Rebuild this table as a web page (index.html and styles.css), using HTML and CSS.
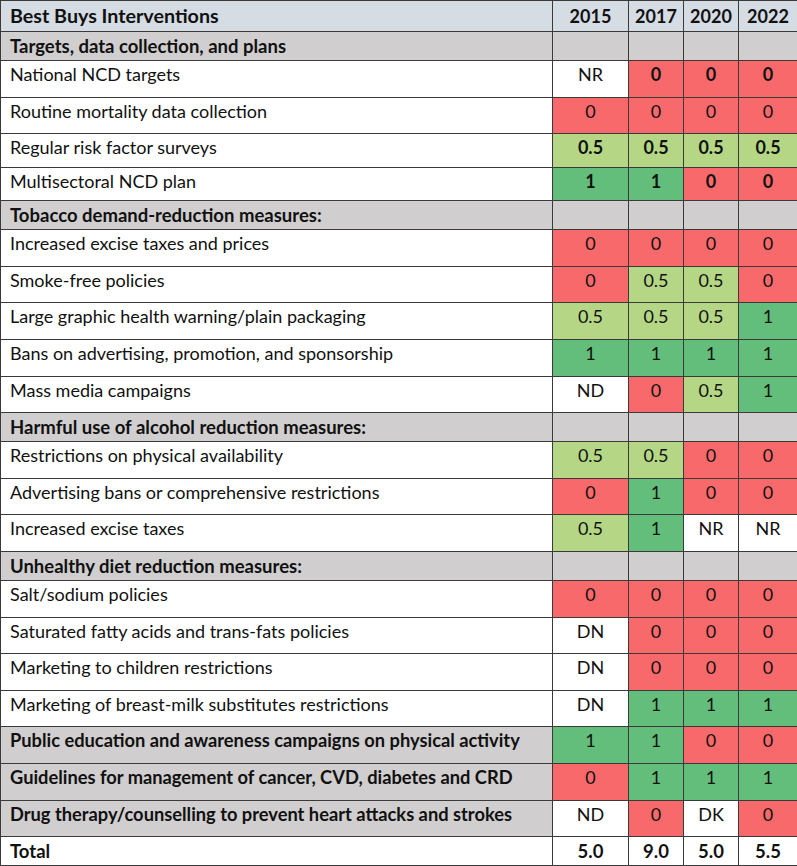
FILE: index.html
```html
<!DOCTYPE html>
<html>
<head>
<meta charset="utf-8">
<link rel="stylesheet" href="styles.css">
</head>
<body>
<table class="bb">
  <colgroup>
    <col class="c-label"><col class="c-2015"><col class="c-yr"><col class="c-yr"><col class="c-2022">
  </colgroup>
  <tr class="head">
    <th class="lbl">Best Buys Interventions</th><th>2015</th><th>2017</th><th>2020</th><th>2022</th>
  </tr>
  <tr class="sec">
    <td class="lbl">Targets, data collection, and plans</td><td></td><td></td><td></td><td></td>
  </tr>
  <tr class="row">
    <td class="lbl">National NCD targets</td><td>NR</td><td class="red b">0</td><td class="red b">0</td><td class="red b">0</td>
  </tr>
  <tr class="row">
    <td class="lbl">Routine mortality data collection</td><td class="red">0</td><td class="red">0</td><td class="red">0</td><td class="red">0</td>
  </tr>
  <tr class="row short">
    <td class="lbl">Regular risk factor surveys</td><td class="lg b">0.5</td><td class="lg b">0.5</td><td class="lg b">0.5</td><td class="lg b">0.5</td>
  </tr>
  <tr class="row short">
    <td class="lbl">Multisectoral NCD plan</td><td class="dg b">1</td><td class="dg b">1</td><td class="red b">0</td><td class="red b">0</td>
  </tr>
  <tr class="sec">
    <td class="lbl">Tobacco demand-reduction measures:</td><td></td><td></td><td></td><td></td>
  </tr>
  <tr class="row">
    <td class="lbl">Increased excise taxes and prices</td><td class="red">0</td><td class="red">0</td><td class="red">0</td><td class="red">0</td>
  </tr>
  <tr class="row">
    <td class="lbl">Smoke-free policies</td><td class="red">0</td><td class="lg">0.5</td><td class="lg">0.5</td><td class="red">0</td>
  </tr>
  <tr class="row">
    <td class="lbl">Large graphic health warning/plain packaging</td><td class="lg">0.5</td><td class="lg">0.5</td><td class="lg">0.5</td><td class="dg">1</td>
  </tr>
  <tr class="row">
    <td class="lbl">Bans on advertising, promotion, and sponsorship</td><td class="dg">1</td><td class="dg">1</td><td class="dg">1</td><td class="dg">1</td>
  </tr>
  <tr class="row">
    <td class="lbl">Mass media campaigns</td><td>ND</td><td class="red">0</td><td class="lg">0.5</td><td class="dg">1</td>
  </tr>
  <tr class="sec">
    <td class="lbl">Harmful use of alcohol reduction measures:</td><td></td><td></td><td></td><td></td>
  </tr>
  <tr class="row">
    <td class="lbl">Restrictions on physical availability</td><td class="lg">0.5</td><td class="lg">0.5</td><td class="red">0</td><td class="red">0</td>
  </tr>
  <tr class="row">
    <td class="lbl">Advertising bans or comprehensive restrictions</td><td class="red">0</td><td class="dg">1</td><td class="red">0</td><td class="red">0</td>
  </tr>
  <tr class="row">
    <td class="lbl">Increased excise taxes</td><td class="lg">0.5</td><td class="dg">1</td><td>NR</td><td>NR</td>
  </tr>
  <tr class="sec">
    <td class="lbl">Unhealthy diet reduction measures:</td><td></td><td></td><td></td><td></td>
  </tr>
  <tr class="row">
    <td class="lbl">Salt/sodium policies</td><td class="red">0</td><td class="red">0</td><td class="red">0</td><td class="red">0</td>
  </tr>
  <tr class="row">
    <td class="lbl">Saturated fatty acids and trans-fats policies</td><td>DN</td><td class="red">0</td><td class="red">0</td><td class="red">0</td>
  </tr>
  <tr class="row">
    <td class="lbl">Marketing to children restrictions</td><td>DN</td><td class="red">0</td><td class="red">0</td><td class="red">0</td>
  </tr>
  <tr class="row">
    <td class="lbl">Marketing of breast-milk substitutes restrictions</td><td>DN</td><td class="dg">1</td><td class="dg">1</td><td class="dg">1</td>
  </tr>
  <tr class="row gray">
    <td class="lbl">Public education and awareness campaigns on physical activity</td><td class="dg">1</td><td class="dg">1</td><td class="red">0</td><td class="red">0</td>
  </tr>
  <tr class="row gray">
    <td class="lbl">Guidelines for management of cancer, CVD, diabetes and CRD</td><td class="red">0</td><td class="dg">1</td><td class="dg">1</td><td class="dg">1</td>
  </tr>
  <tr class="row gray">
    <td class="lbl">Drug therapy/counselling to prevent heart attacks and strokes</td><td>ND</td><td class="red">0</td><td>DK</td><td class="red">0</td>
  </tr>
  <tr class="total">
    <td class="lbl">Total</td><td class="b">5.0</td><td class="b">9.0</td><td class="b">5.0</td><td class="b">5.5</td>
  </tr>
</table>
</body>
</html>
```

FILE: styles.css
```css
html, body {
  margin: 0;
  padding: 0;
  background: #ffffff;
}

.bb {
  border-collapse: collapse;
  table-layout: fixed;
  width: 797px;
  font-family: Lato, "Open Sans", sans-serif;
  font-size: 18px;
  color: #111;
}

.c-label { width: 552px; }
.c-2015 { width: 76px; }
.c-yr { width: 55px; }
.c-2022 { width: 59px; }

.bb th,
.bb td {
  box-sizing: border-box;
  border: 1px solid #3a3a3a;
  padding: 0;
  text-align: center;
  vertical-align: top;
  line-height: 24px;
  white-space: nowrap;
  overflow: hidden;
}

.bb .lbl {
  text-align: left;
  padding-left: 9px;
}

.head th {
  height: 31px;
  background: #d6dce4;
  font-weight: 700;
  font-size: 18px;
  vertical-align: middle;
}

.head th.lbl {
  font-size: 19.7px;
}

.sec td {
  height: 29px;
  background: #d0cece;
  font-weight: 700;
  font-size: 18.5px;
  vertical-align: middle;
}

.row td {
  height: 36.6px;
  padding-top: 1px;
}

.row.short td {
  height: 33.5px;
}

.row.gray td.lbl {
  background: #d0cece;
  font-weight: 700;
  font-size: 18.3px;
}

.total td {
  height: 29px;
  font-weight: 700;
  font-size: 18.5px;
  vertical-align: middle;
}

.red { background: #f8696b; }
.lg { background: #b5d785; }
.dg { background: #63be7b; }
.b { font-weight: 700; }
```
